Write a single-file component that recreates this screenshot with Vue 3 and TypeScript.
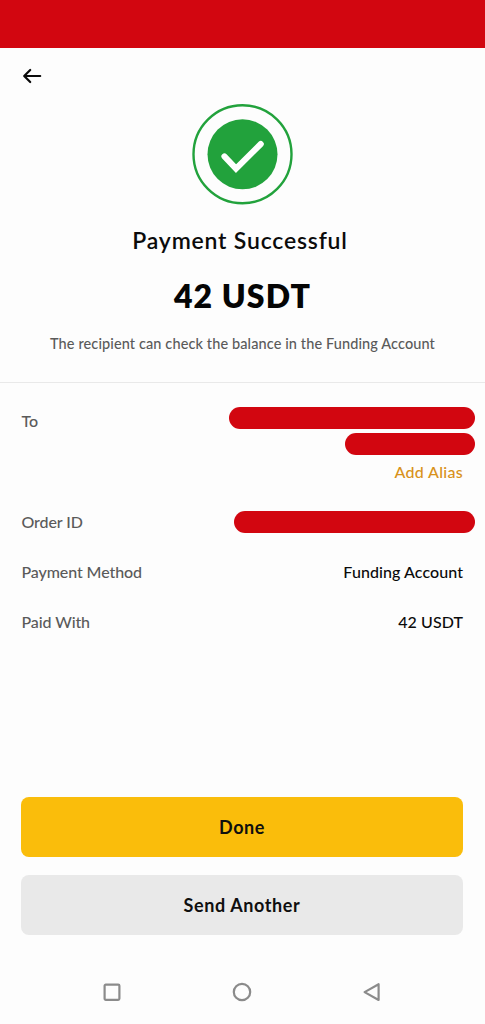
<script setup lang="ts">
interface Detail {
  label: string
  value?: string
  kind: 'recipient' | 'redacted' | 'text'
}

const details: Detail[] = [
  { label: 'To', kind: 'recipient' },
  { label: 'Order ID', kind: 'redacted' },
  { label: 'Payment Method', value: 'Funding Account', kind: 'text' },
  { label: 'Paid With', value: '42 USDT', kind: 'text' },
]
</script>

<template>
  <div class="screen">
    <div class="status-bar"></div>
    <header class="top">
      <button class="back" aria-label="Back">
        <svg width="20" height="18" viewBox="0 0 20 18" fill="none" stroke="#0b0b0b" stroke-width="2.2" stroke-linecap="round" stroke-linejoin="round">
          <path d="M18.2 9H2.4M8.2 3L2.2 9l6 6" />
        </svg>
      </button>
    </header>

    <section class="summary">
      <svg class="badge" width="101" height="102" viewBox="0 0 101 102" fill="none">
        <circle cx="50.5" cy="51.3" r="49" stroke="#22a23c" stroke-width="2.4" />
        <circle cx="50.5" cy="51.3" r="35" fill="#22a23c" />
        <path d="M32.4 53.4L44 65.6L68.8 41" stroke="#fff" stroke-width="6" stroke-linecap="round" />
      </svg>
      <h1 class="title">Payment Successful</h1>
      <p class="amount">42 USDT</p>
      <p class="note">The recipient can check the balance in the Funding Account</p>
    </section>

    <dl class="details">
      <div v-for="d in details" :key="d.label" class="row" :class="d.kind">
        <dt>{{ d.label }}</dt>
        <dd v-if="d.kind === 'recipient'" class="stack">
          <span class="bar long"></span>
          <span class="bar short"></span>
          <a class="alias">Add Alias</a>
        </dd>
        <dd v-else-if="d.kind === 'redacted'" class="stack"><span class="bar order"></span></dd>
        <dd v-else class="value">{{ d.value }}</dd>
      </div>
    </dl>

    <div class="actions">
      <button class="btn primary">Done</button>
      <button class="btn secondary">Send Another</button>
    </div>

    <nav class="system-nav">
      <svg width="20" height="20" viewBox="0 0 20 20"><rect x="2.6" y="2.6" width="14.8" height="15.2" rx="1.2" /></svg>
      <svg width="20" height="20" viewBox="0 0 20 20"><circle cx="10" cy="10" r="8.2" /></svg>
      <svg width="20" height="20" viewBox="0 0 20 20"><path d="M16.6 2.2v15.8L2.6 10.1z" /></svg>
    </nav>
  </div>
</template>

<style>
body {
  margin: 0;
  background: #fdfdfd;
}
</style>

<style scoped>
.screen {
  display: flex;
  flex-direction: column;
  width: 485px;
  height: 1024px;
  overflow: hidden;
  background: #fdfdfd;
  color: #0b0b0b;
  font-family: Lato, "Open Sans", sans-serif;
}
.status-bar {
  flex: none;
  height: 48px;
  background: #d20610;
}
.top {
  flex: none;
  display: flex;
  height: 55px;
  padding: 19px 0 0 22px;
  box-sizing: border-box;
}
.back {
  height: 18px;
  padding: 0;
  border: 0;
  background: none;
}
.back svg {
  display: block;
}
.summary {
  flex: none;
  display: flex;
  flex-direction: column;
  align-items: center;
  height: 280px;
  box-sizing: border-box;
  border-bottom: 1px solid #e9e9e9;
}
.badge {
  flex: none;
  margin-right: 1px;
}
.title {
  margin: 20px 0 0;
  padding-right: 5px;
  font-size: 23px;
  line-height: 30px;
  font-weight: 600;
  letter-spacing: 0.8px;
  white-space: nowrap;
}
.amount {
  margin: 21px 0 0;
  font-size: 32px;
  line-height: 40px;
  font-weight: 800;
  letter-spacing: 1.1px;
  color: #050505;
}
.note {
  margin: 18px 0 0;
  font-size: 14.5px;
  line-height: 20px;
  font-weight: 500;
  letter-spacing: 0.11px;
  color: #5a5a5a;
  white-space: nowrap;
}
.details {
  flex: 1;
  margin: 0;
  padding: 23px 22px 0 21.5px;
}
.row {
  display: flex;
  justify-content: space-between;
  align-items: flex-start;
  height: 50px;
  font-size: 16px;
  line-height: 30px;
}
.row.recipient {
  height: 101px;
}
dt {
  font-weight: 500;
  letter-spacing: -0.1px;
  color: #5a5a5a;
}
dd {
  margin: 0;
}
.value {
  font-weight: 500;
  letter-spacing: 0.08px;
}
.stack {
  display: flex;
  flex-direction: column;
  align-items: flex-end;
  gap: 4px;
}
.bar {
  height: 22px;
  margin-right: -12px;
  border-radius: 11px;
  background: #d20610;
}
.long {
  width: 246px;
  margin-top: 1px;
}
.short {
  width: 130px;
}
.order {
  width: 241px;
  margin-top: 4px;
}
.alias {
  font-weight: 500;
  line-height: 26px;
  letter-spacing: 0.3px;
  color: #d8921b;
}
.actions {
  flex: none;
  display: flex;
  flex-direction: column;
  gap: 18px;
  padding: 0 22px 0 21px;
}
.btn {
  height: 60px;
  padding: 0;
  border: 0;
  border-radius: 8px;
  font-family: inherit;
  font-size: 18px;
  font-weight: 700;
  letter-spacing: 0.6px;
  color: #0f0f0f;
}
.primary {
  background: #fabd0b;
}
.secondary {
  background: #e9e9e9;
}
.system-nav {
  flex: none;
  display: flex;
  justify-content: space-between;
  height: 89px;
  padding: 47px 103px 0 102px;
  box-sizing: border-box;
}
.system-nav svg {
  fill: none;
  stroke: #8b8b8b;
  stroke-width: 2.2;
  stroke-linejoin: round;
}
</style>
